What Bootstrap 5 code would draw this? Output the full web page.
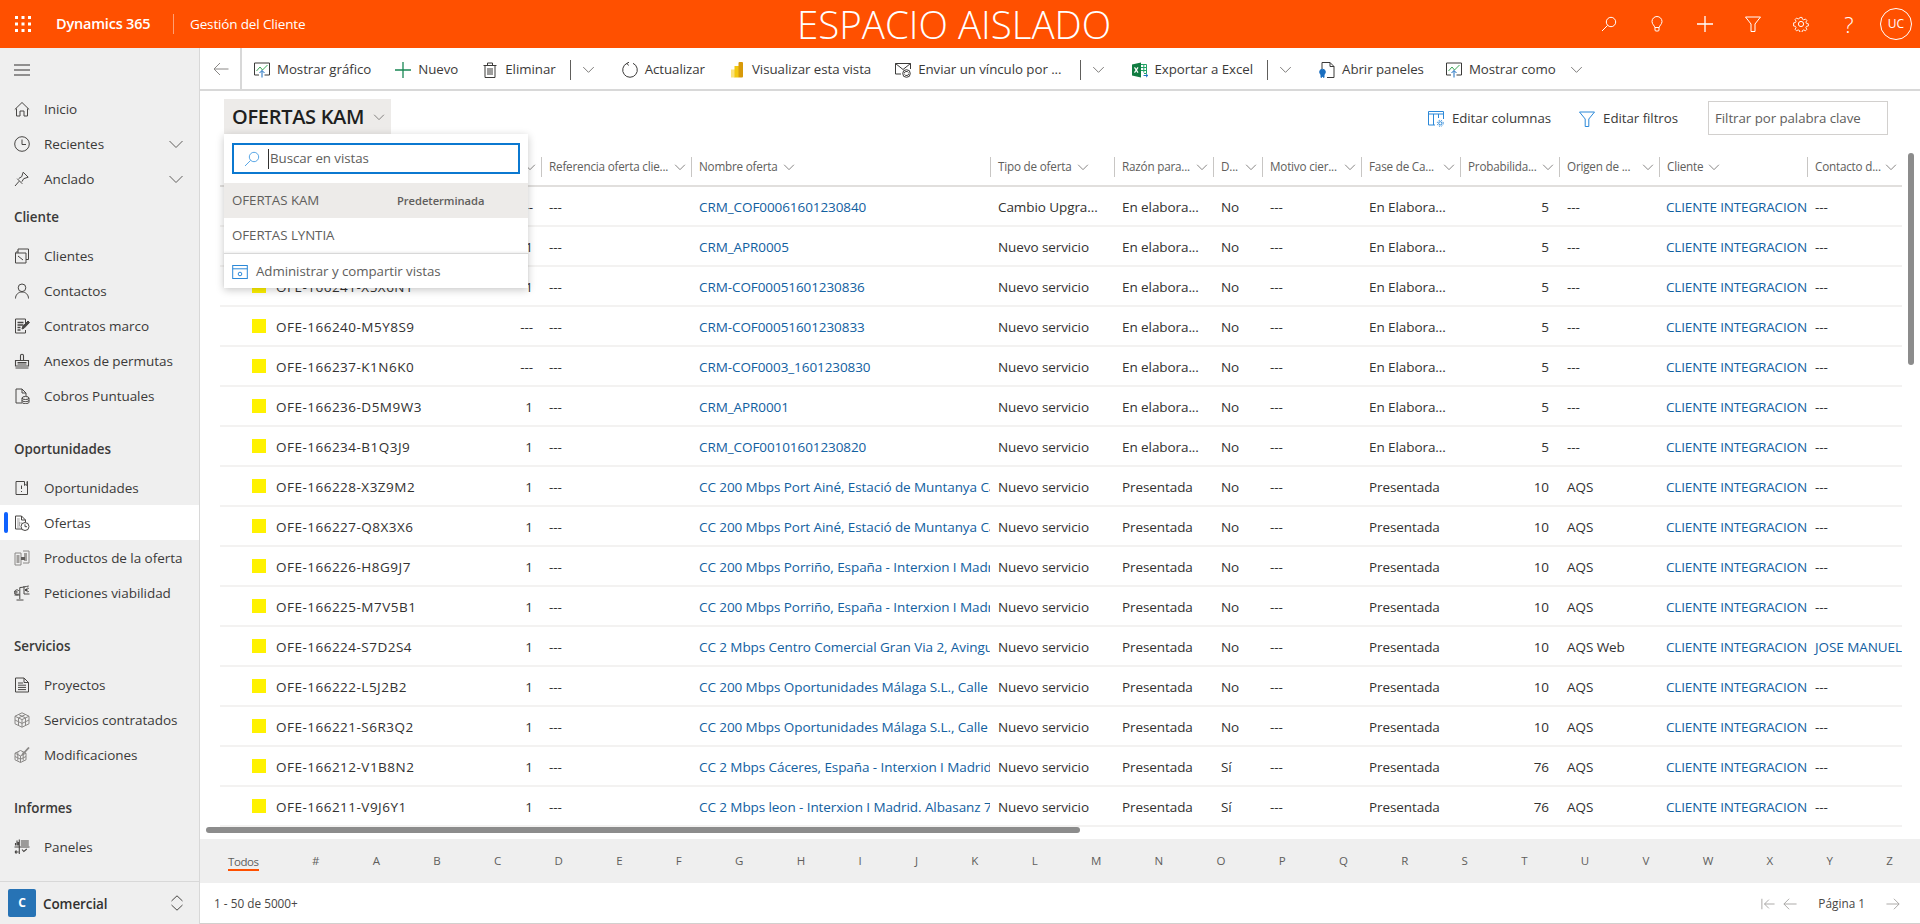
<!doctype html>
<html lang="es">
<head>
<meta charset="utf-8">
<title>Ofertas</title>
<link href="https://cdn.jsdelivr.net/npm/bootstrap@5.3.0/dist/css/bootstrap.min.css" rel="stylesheet">
<style>
html,body{height:100%;overflow:hidden}
body{font-family:"Open Sans","Noto Sans",sans-serif;font-size:13.5px;color:#323130;background:#fff}
#shell{min-height:0}
svg.ic{width:16px;height:16px;flex:none;fill:none;stroke:currentColor;stroke-width:1}
.appbar{height:48px;background:#ff5000;color:#fff;flex:none}
.waffle{margin:0 0 0 15px;color:#fff;stroke:none!important;fill:#fff!important}
.brand{font-size:14.5px;font-weight:600;margin-left:25px;width:117px;letter-spacing:-.2px}
.brand-sep{width:1px;height:20px;background:rgba(255,255,255,.45)}
.app-name{font-size:13.5px;margin-left:16px;width:270px;letter-spacing:-.15px}
.sandbox{font-size:38.5px;font-weight:300;line-height:48px;margin-left:337px;width:340px;white-space:nowrap}
.head-ic{width:48px;justify-content:center;display:flex;align-items:center;height:48px}
.head-q{font-size:22px;font-weight:300;line-height:1}
.avatar{width:32px;height:32px;border:1px solid #fff;border-radius:50%;font-size:12px;margin:0 8px 0 7px}
.side{width:200px;background:#efefef;border-right:1px solid #d8d8d8;flex:none}
.burger{height:43px;padding-left:14px}
.nv-item{height:35px;padding-left:14px;padding-top:1px;position:relative;white-space:nowrap;letter-spacing:-.05px;color:#3b3a39}
.nv-item svg.ic{margin-right:14px;color:#484644}
.nv-item svg.chev{margin:0 15px 0 auto;color:#605e5c}
.nv-item.muted svg.ic{color:#8a8886}
.nv-item.on{background:#fff}
.nv-item.on::before{content:"";position:absolute;left:4px;top:7px;bottom:7px;width:4px;background:#0f62fe;border-radius:2px}
.nv-head{height:42px;padding-left:14px;padding-top:1px;font-weight:600;color:#3b3a39;font-size:13.4px;letter-spacing:-.05px}
.nv-gap{margin-top:15px}
.area-sw{height:43px;border-top:1px solid #d8d8d8;padding-left:8px;flex:none}
.area-tile{width:28px;height:28px;background:#2773b5;color:#fff;font-weight:700;font-size:12px;border-radius:2px}
.area-name{margin-left:7px;font-weight:600;letter-spacing:-.1px;padding-top:2px}
.area-chev{margin-left:auto;margin-right:14px;color:#484644}
.cmd{height:43px;border-bottom:2px solid #d8d8d8;flex:none;white-space:nowrap;font-size:13.3px;letter-spacing:-.05px;color:#3b3a39}
.back-cell{width:42px;height:41px;border-right:2px solid #d8d8d8;padding-left:13px;color:#8a8886;margin-right:12px}
.cb{margin-right:24px;padding-top:2px}
.cb svg.ic{margin-right:7px}
.cb.tight{margin-right:14px}
.cb.mid{margin-right:18px}
.cb.narrow{margin-right:22px}
.cb-sep{width:1px;height:20px;background:#605e5c;margin:2px 11px 0 0}
svg.ic.cb-chev{width:13px;height:13px;margin:2px 27px 0 0;color:#605e5c}
.view-head{height:66px;flex:none;padding:8px 32px 0 24px;align-items:flex-start}
.view-btn{height:35px;width:167px;background:#edebe9;padding:1px 0 0 8px;font-size:20px;font-weight:600;color:#201f1e;white-space:nowrap;letter-spacing:-.3px}
.view-btn svg.ic{margin-left:9px;color:#605e5c;width:12px;height:12px}
.vh-act{font-size:13.3px;letter-spacing:-.05px;color:#3b3a39;white-space:nowrap;height:39px}
.vh-act svg{margin-right:8px}
.vh-act.first{margin-right:28px}
.kw{width:180px;height:34px;border:1px solid #d2d0ce;margin-left:30px;margin-top:2px;padding:2px 0 0 6px;color:#605e5c;font-size:13.3px;letter-spacing:-.05px}
.grid-wrap{flex:1 1 0;min-height:0;position:relative;overflow:hidden}
.dg{table-layout:fixed;width:1682px;margin:0 0 0 20px;border-collapse:separate;border-spacing:0;--bs-table-bg:transparent;font-size:13.5px}
.dg th{height:30px;padding:0;border-bottom:2px solid #e1dfdd;font-weight:400;font-size:11.7px;color:#605e5c;letter-spacing:-.2px;vertical-align:top;overflow:hidden}
.hc{height:20px;border-left:1px solid #c8c6c4;padding:0 5px 0 7px;white-space:nowrap}
.hc svg.ic{width:12px;height:12px;margin-left:5px}
.hc svg.far{margin-left:auto}
.dg td{height:40px;padding:2px 0 0 8px;border-bottom:2px solid #f3f2f1;white-space:nowrap;overflow:hidden;vertical-align:middle;color:#323130;letter-spacing:-.08px}
.dg td.nm{padding-left:32px;letter-spacing:.49px}
.dg td.rt{text-align:right;padding:2px 8px 0 0}
.dg td.rt2{text-align:right;padding:2px 10px 0 0}
.dg td.cl{padding-left:7px;letter-spacing:-.16px}
.dg a{color:#11609f;text-decoration:none}
.sq{display:inline-block;width:14px;height:14px;background:#fff200;margin-right:10px;vertical-align:-1px}
.hthumb{position:absolute;left:6px;bottom:6px;height:6px;width:874px;background:#8c8c8c;border-radius:3px}
.vthumb{position:absolute;right:6px;top:105px;height:212px;width:6px;background:#8c8c8c;border-radius:3px;z-index:2}
.alpha{height:44px;background:#efefef;flex:none;padding:0 27px 0 28px;font-size:11.5px;color:#605e5c}
.alpha .now{border-bottom:2px solid #ff5000;line-height:14px;padding-top:2px;position:relative;top:1px;letter-spacing:-.4px}
.pager{height:41px;border-bottom:1px solid #d2d0ce;flex:none;padding:2px 20px 0 14px;font-size:11.8px;color:#484644}
.pager svg.ic{color:#a19f9d;width:14px;height:14px}
.pg-txt{margin:0 21px}
.vmenu{position:absolute;left:24px;top:86px;width:304px;height:154px;background:#fff;box-shadow:0 2px 8px rgba(0,0,0,.22);z-index:5;color:#605e5c;font-size:13.3px;letter-spacing:-.05px}
.vsearch{height:31px;margin:9px 8px;border:2px solid #0b78d0;padding:1px 0 0 10px;color:#605e5c}
.vsearch svg.ic{color:#5aa7e6;margin-right:8px}
.vsearch i{width:1px;height:20px;background:#323130;margin-right:1px}
.vitem{height:35px;padding:2px 0 0 8px;white-space:nowrap;flex:none}
.vitem.sel{background:#edebe9}
.vitem b{font-weight:600;font-size:11.2px;position:absolute;left:173px}
.vman{height:36px;border-top:1px solid #d8d8d8;box-shadow:0 -1px 2px rgba(0,0,0,.08);padding:3px 0 0 8px;gap:8px}
.vman svg.ic{color:#2b88d8}
.c1{width:220px}.c2{width:101px}.c3{width:150px}.c4{width:299px}.c5{width:124px}.c6{width:99px}.c7{width:49px}.c8{width:99px}.c9{width:99px}.c10{width:99px}.c11{width:100px}.c12{width:148px}.c13{width:95px}
</style>
</head>
<body class="d-flex flex-column">
<svg width="0" height="0" class="position-absolute">
<defs>
<symbol id="i-chev" viewBox="0 0 16 16"><path d="M1.500 5 8 11.500 14.500 5"/></symbol>
<symbol id="i-search" viewBox="0 0 16 16"><circle cx="10" cy="6" r="4.700"/><path d="M6.600 9.400 1 15"/></symbol>
<symbol id="i-bulb" viewBox="0 0 16 16"><path d="M5.800 11.500C5.600 9.500 3 8.300 3 5.500a5 5 0 0 1 10 0c0 2.800-2.600 4-2.800 6z"/><path d="M6 11.500V14a1 1 0 0 0 1 1h2a1 1 0 0 0 1-1v-2.500"/></symbol>
<symbol id="i-plus" viewBox="0 0 16 16"><path d="M8 0v16M0 8h16" stroke-width="1.300"/></symbol>
<symbol id="i-funnel" viewBox="0 0 16 16"><path d="M.5 1h15L10 8v7.500H6V8z"/></symbol>
<symbol id="i-gear" viewBox="0 0 16 16"><circle cx="8" cy="8" r="2.600"/><path d="M6.800.8h2.400l.4 2 1.500.7 1.800-1 1.600 1.700-1.100 1.700.7 1.500 2 .4v2.400l-2 .4-.7 1.500 1.100 1.700-1.600 1.700-1.800-1-1.500.7-.4 2H6.800l-.4-2-1.500-.7-1.800 1-1.600-1.700 1.100-1.700-.7-1.500-2-.4V6.800l2-.4.7-1.500-1.100-1.700 1.600-1.700 1.800 1 1.500-.7z" transform="translate(.7 .7) scale(.91)"/></symbol>
<symbol id="i-home" viewBox="0 0 16 16"><path d="M.8 8.500 8 1.500l7.200 7M2.500 7.500v7.500h3.500v-5h4v5h3.500V7.500"/></symbol>
<symbol id="i-clock" viewBox="0 0 16 16"><circle cx="8" cy="8" r="7.300"/><path d="M8 3.500V8.500H12"/></symbol>
<symbol id="i-pin" viewBox="0 0 16 16"><path d="M1 15l4.200-4.800M3.200 7.700l5.100 5.100M4.700 7.500l3-1.800 1.500-4.500 5 5-4.500 1.500-1.800 3"/></symbol>
<symbol id="i-client" viewBox="0 0 16 16"><path d="M1.500 15V5H12v10zM1.500 5 4 2.500V1h10.500v10.500H12M4 5v-2.500M4 8l5 4"/></symbol>
<symbol id="i-person" viewBox="0 0 16 16"><circle cx="8" cy="4.800" r="3.800"/><path d="M1.500 15.500c0-3.800 2.800-6.500 6.500-6.500s6.500 2.700 6.500 6.500"/></symbol>
<symbol id="i-contract" viewBox="0 0 16 16"><path d="M11.500 6V1h-10v14h10v-3"/><path d="M3.500 4.500h6M3.500 7h6M3.500 9.500h3M3.500 12h3" stroke-width="1.500"/><path d="M8 11l.7-2.500 5.300-5.500 1.500 1.500-5.300 5.600z" fill="currentColor"/></symbol>
<symbol id="i-stamp" viewBox="0 0 16 16"><path d="M6.500 7V2.800a1.500 1.500 0 0 1 3 0V7M1.500 7.500h13V13h-13zM1.500 15h13M3.500 9.500h9M3.500 11h9" stroke-width="1.100"/></symbol>
<symbol id="i-cobro" viewBox="0 0 16 16"><path d="M8 15H2V1h6l4 4v3M8 1v4h4"/><ellipse cx="11.500" cy="10" rx="3.500" ry="1.500"/><path d="M8 10v4.300c0 .8 1.600 1.300 3.500 1.300s3.500-.5 3.500-1.300V10M8 12.300c0 .8 1.600 1.300 3.500 1.300s3.500-.5 3.500-1.300"/></symbol>
<symbol id="i-opp" viewBox="0 0 16 16"><path d="M10.500 1.500H2v13h11.500V1.500H13v4l-1.200-1-1.300 1zM7.500 5.500V9M7.500 11v1"/></symbol>
<symbol id="i-oferta" viewBox="0 0 16 16"><path d="M8 14H1.500V1h6l4 4v2M7.500 1v4h4"/><path d="M3.500 4h2M3.500 6h2M3.500 8h4M3.500 10h2.500M3.500 12h2" stroke-dasharray="1 .6"/><circle cx="11" cy="11.500" r="4"/><path d="M11 9.300v2.400h2"/></symbol>
<symbol id="i-prod" viewBox="0 0 16 16"><path d="M1 3h6v12H1zM9 1h6v12H9" stroke="#8a8886"/><path d="M2.500 5h3v8h-3zM10 3h3v8h-3z" fill="#a19f9d" stroke="none"/><path d="M7 7h4v3H7z" fill="#605e5c" stroke="none"/></symbol>
<symbol id="i-viab" viewBox="0 0 16 16"><path d="M5.800 2.500v11.500M2.500 15h7M5.800 2.500c3 0 6-1 9-1.500M.5 10h5.300M10 1v8h5.500"/><path d="M4.800 5.700A2.500 2.500 0 1 0 4.800 9M.5 6.800h3M.5 8h3M14.800 3.400a1.800 1.800 0 1 0 0 3.100M11 4.500h2.500M11 5.500h2.500"/></symbol>
<symbol id="i-doc" viewBox="0 0 16 16"><path d="M10 1H1.500v14h13V5.500zM10 1v4.500h4.500M4 6h5M4 8.200h8M4 10.400h8M4 12.600h8"/></symbol>
<symbol id="i-cube" viewBox="0 0 16 16"><path d="M8 .8 15 4.200v7.600L8 15.200 1 11.800V4.200zM1 4.200l7 3.400 7-3.400M8 7.600v7.600M4.500 2.500l7 3.400M11.500 2.500l-7 3.400M1 8l7 3.400L15 8M4.500 6v7.500M11.500 6v7.500"/></symbol>
<symbol id="i-mod" viewBox="0 0 16 16"><path d="M6.500 3.500 12 6.200v6.600l-5.500 2.700L1 12.800V6.200zM1 6.200l5.500 2.700L12 6.200M6.500 9v6.500M1 9.500l5.500 2.700 5.500-2.700M3.800 5v8.500M9.200 5v8.500"/><path d="M8 8l7-7.500" stroke-width="1.800"/></symbol>
<symbol id="i-panel" viewBox="0 0 16 16"><path d="M.5 8h15M5.300.5V15M1.500 6.500V4M3 6.500V1.500M4.200 6.500V3M6.800 2h8M6.800 4h8M6.800 6h8M1 13h3.500M1 13l1.500-1.500M1 13l1.500 1.500M8 10.500l1.800 2L12.800 10" stroke-width="1.100"/></symbol>
<symbol id="i-updown" viewBox="0 0 16 16"><path d="M2.500 6 8 .8 13.500 6M2.500 10 8 15.200 13.500 10"/></symbol>
<symbol id="i-left" viewBox="0 0 16 16"><path d="M15.500 8H1M7 2 1 8l6 6"/></symbol>
<symbol id="i-right" viewBox="0 0 16 16"><path d="M.5 8H15M9 2l6 6-6 6"/></symbol>
<symbol id="i-first" viewBox="0 0 16 16"><path d="M1 2v12M15.500 8H4M9 3 4 8l5 5"/></symbol>
<symbol id="i-chart" viewBox="0 0 16 16"><path d="M5 13H.5V1h15v12h-5" stroke="#3b3a39"/><path d="M2.500 9 6 5l2.500 3 5-5" stroke="#3aa655"/><path d="M8 15.500V8.500M5.500 11 8 8.500l2.500 2.500" stroke="#1a6fc0"/></symbol>
<symbol id="i-trash" viewBox="0 0 16 16"><path d="M1.500 3.500h13M5.500 3.500V1h5v2.500M3 3.500V15.500h10V3.500M6 6v7M8 6v7M10 6v7"/></symbol>
<symbol id="i-refresh" viewBox="0 0 16 16"><path d="M5 1.300a7.300 7.300 0 1 0 6 0"/><path d="M5 1.300 7 .2M5 1.300 6.500 3.500"/></symbol>
<symbol id="i-pbi" viewBox="0 0 16 16"><rect x="2" y="7.500" width="4" height="8" fill="#fbe27a" stroke="none"/><rect x="5.500" y="4" width="4.500" height="11.500" fill="#f2c811" stroke="none"/><rect x="9.500" y="0" width="4.500" height="15.500" rx="1" fill="#d89a0a" stroke="none"/></symbol>
<symbol id="i-mail" viewBox="0 0 16 16"><path d="M6 12H.5V1.500h15V7M.5 1.500 8 7.500l7.500-6"/><circle cx="11.500" cy="11.500" r="3.800"/><path d="M9 11.500a2.500 2.500 0 0 1 4.500-1M14 11.500a2.500 2.500 0 0 1-4.500 1"/></symbol>
<symbol id="i-xl" viewBox="0 0 16 16"><path d="M0 2.500 9 .5v15l-9-2z" fill="#107c41" stroke="none"/><path d="M2.500 5.300 6 10.700M6 5.300l-3.500 5.400" stroke="#fff" stroke-width="1.200"/><path d="M9 2.500h5.500v9H12M9 5.500h5.500M9 8.500h5.500M11.800 2.500v8" stroke="#21a366"/><path d="M11.500 13.500h4M14 11.800l1.800 1.700-1.800 1.700" stroke="#1a6fc0"/></symbol>
<symbol id="i-dash" viewBox="0 0 16 16"><path d="M6 .5h5l4 4v11H8M11 .5v4h4M3 7V.5h3"/><circle cx="3.500" cy="10" r="2.800" fill="#1a6fc0" stroke="#1a6fc0"/><path d="M2 12v3.500l1.500-1 1.500 1V12" fill="#1a6fc0" stroke="#1a6fc0"/></symbol>
<symbol id="i-cols" viewBox="0 0 16 16"><path d="M7 14H.5V.5h15V8M.5 3h15M5.500 3v11M10.500 3v4" stroke="#2b88d8"/><circle cx="12.300" cy="12.300" r="1.600" stroke="#2b88d8"/><circle cx="12.300" cy="12.300" r="3" stroke="#2b88d8" stroke-dasharray="1.200 1.200"/></symbol>
<symbol id="i-filter" viewBox="0 0 16 16"><path d="M.5 1h15L9.800 8v7.500H6.200V8z" stroke="#2b88d8"/></symbol>
<symbol id="i-manage" viewBox="0 0 16 16"><rect x=".7" y="1.500" width="14.600" height="13"/><path d="M.7 4.800h14.600"/><circle cx="8" cy="10" r="1.800"/></symbol>
<symbol id="i-burger" viewBox="0 0 16 16"><path d="M0 3h16M0 8h16M0 13h16" stroke-width="1.100"/></symbol>
</defs>
</svg>

<header class="appbar d-flex align-items-center">
  <svg class="ic waffle" viewBox="0 0 16 16"><rect x="0" y="0" width="3" height="3"/><rect x="6.500" y="0" width="3" height="3"/><rect x="13" y="0" width="3" height="3"/><rect x="0" y="6.500" width="3" height="3"/><rect x="6.500" y="6.500" width="3" height="3"/><rect x="13" y="6.500" width="3" height="3"/><rect x="0" y="13" width="3" height="3"/><rect x="6.500" y="13" width="3" height="3"/><rect x="13" y="13" width="3" height="3"/></svg>
  <div class="brand">Dynamics 365</div>
  <div class="brand-sep"></div>
  <div class="app-name">Gestión del Cliente</div>
  <div class="sandbox">ESPACIO AISLADO</div>
  <div class="ms-auto d-flex align-items-center">
    <div class="head-ic"><svg class="ic"><use href="#i-search"/></svg></div>
    <div class="head-ic"><svg class="ic"><use href="#i-bulb"/></svg></div>
    <div class="head-ic"><svg class="ic"><use href="#i-plus"/></svg></div>
    <div class="head-ic"><svg class="ic"><use href="#i-funnel"/></svg></div>
    <div class="head-ic"><svg class="ic"><use href="#i-gear"/></svg></div>
    <div class="head-ic head-q">?</div>
    <div class="avatar d-flex align-items-center justify-content-center">UC</div>
  </div>
</header>

<div class="d-flex flex-grow-1" id="shell">
  <aside class="side d-flex flex-column">
    <div class="flex-grow-1">
      <div class="burger d-flex align-items-center"><svg class="ic"><use href="#i-burger"/></svg></div>
      <div class="nv-item d-flex align-items-center"><svg class="ic"><use href="#i-home"/></svg>Inicio</div>
      <div class="nv-item d-flex align-items-center"><svg class="ic"><use href="#i-clock"/></svg>Recientes<svg class="ic chev"><use href="#i-chev"/></svg></div>
      <div class="nv-item d-flex align-items-center"><svg class="ic"><use href="#i-pin"/></svg>Anclado<svg class="ic chev"><use href="#i-chev"/></svg></div>
      <div class="nv-head d-flex align-items-center">Cliente</div>
      <div class="nv-item d-flex align-items-center"><svg class="ic"><use href="#i-client"/></svg>Clientes</div>
      <div class="nv-item d-flex align-items-center"><svg class="ic"><use href="#i-person"/></svg>Contactos</div>
      <div class="nv-item d-flex align-items-center"><svg class="ic"><use href="#i-contract"/></svg>Contratos marco</div>
      <div class="nv-item d-flex align-items-center"><svg class="ic"><use href="#i-stamp"/></svg>Anexos de permutas</div>
      <div class="nv-item d-flex align-items-center"><svg class="ic"><use href="#i-cobro"/></svg>Cobros Puntuales</div>
      <div class="nv-head nv-gap d-flex align-items-center">Oportunidades</div>
      <div class="nv-item d-flex align-items-center"><svg class="ic"><use href="#i-opp"/></svg>Oportunidades</div>
      <div class="nv-item on d-flex align-items-center"><svg class="ic"><use href="#i-oferta"/></svg>Ofertas</div>
      <div class="nv-item muted d-flex align-items-center"><svg class="ic"><use href="#i-prod"/></svg>Productos de la oferta</div>
      <div class="nv-item d-flex align-items-center"><svg class="ic"><use href="#i-viab"/></svg>Peticiones viabilidad</div>
      <div class="nv-head nv-gap d-flex align-items-center">Servicios</div>
      <div class="nv-item d-flex align-items-center"><svg class="ic"><use href="#i-doc"/></svg>Proyectos</div>
      <div class="nv-item muted d-flex align-items-center"><svg class="ic"><use href="#i-cube"/></svg>Servicios contratados</div>
      <div class="nv-item muted d-flex align-items-center"><svg class="ic"><use href="#i-mod"/></svg>Modificaciones</div>
      <div class="nv-head nv-gap d-flex align-items-center">Informes</div>
      <div class="nv-item d-flex align-items-center"><svg class="ic"><use href="#i-panel"/></svg>Paneles</div>
    </div>
    <div class="area-sw d-flex align-items-center">
      <div class="area-tile d-flex align-items-center justify-content-center">C</div>
      <div class="area-name">Comercial</div>
      <svg class="ic area-chev"><use href="#i-updown"/></svg>
    </div>
  </aside>

  <main class="flex-grow-1 d-flex flex-column position-relative overflow-hidden">
    <div class="cmd d-flex align-items-center">
      <div class="back-cell d-flex align-items-center"><svg class="ic"><use href="#i-left"/></svg></div>
      <div class="cb d-flex align-items-center"><svg class="ic"><use href="#i-chart"/></svg>Mostrar gráfico</div>
      <div class="cb d-flex align-items-center"><svg class="ic text-success"><use href="#i-plus"/></svg>Nuevo</div>
      <div class="cb tight d-flex align-items-center"><svg class="ic"><use href="#i-trash"/></svg>Eliminar</div>
      <div class="cb-sep"></div><svg class="ic cb-chev"><use href="#i-chev"/></svg>
      <div class="cb d-flex align-items-center"><svg class="ic"><use href="#i-refresh"/></svg>Actualizar</div>
      <div class="cb d-flex align-items-center"><svg class="ic"><use href="#i-pbi"/></svg>Visualizar esta vista</div>
      <div class="cb mid d-flex align-items-center"><svg class="ic"><use href="#i-mail"/></svg>Enviar un vínculo por ...</div>
      <div class="cb-sep"></div><svg class="ic cb-chev"><use href="#i-chev"/></svg>
      <div class="cb tight d-flex align-items-center"><svg class="ic"><use href="#i-xl"/></svg>Exportar a Excel</div>
      <div class="cb-sep"></div><svg class="ic cb-chev"><use href="#i-chev"/></svg>
      <div class="cb narrow d-flex align-items-center"><svg class="ic"><use href="#i-dash"/></svg>Abrir paneles</div>
      <div class="cb tight d-flex align-items-center"><svg class="ic"><use href="#i-chart"/></svg>Mostrar como</div>
      <svg class="ic cb-chev"><use href="#i-chev"/></svg>
    </div>

    <div class="view-head d-flex">
      <div class="view-btn d-flex align-items-center">OFERTAS KAM<svg class="ic"><use href="#i-chev"/></svg></div>
      <div class="ms-auto d-flex">
        <div class="vh-act first d-flex align-items-center"><svg class="ic"><use href="#i-cols"/></svg>Editar columnas</div>
        <div class="vh-act d-flex align-items-center"><svg class="ic"><use href="#i-filter"/></svg>Editar filtros</div>
        <div class="kw d-flex align-items-center">Filtrar por palabra clave</div>
      </div>
    </div>

    <div class="vmenu d-flex flex-column">
      <div class="vsearch d-flex align-items-center"><svg class="ic"><use href="#i-search"/></svg><i></i>Buscar en vistas</div>
      <div class="vitem sel d-flex align-items-center">OFERTAS KAM<b>Predeterminada</b></div>
      <div class="vitem d-flex align-items-center">OFERTAS LYNTIA</div>
      <div class="vman d-flex align-items-center"><svg class="ic"><use href="#i-manage"/></svg>Administrar y compartir vistas</div>
    </div>

    <div class="vthumb"></div>

    <div class="grid-wrap">
      <table class="table dg mb-0">
        <colgroup><col class="c1"><col class="c2"><col class="c3"><col class="c4"><col class="c5"><col class="c6"><col class="c7"><col class="c8"><col class="c9"><col class="c10"><col class="c11"><col class="c12"><col class="c13"></colgroup>
        <thead id="ghead"></thead>
        <tbody id="gbody"></tbody>
      </table>
      <div class="hthumb"></div>
    </div>

    <div class="alpha d-flex align-items-center justify-content-between" id="alpha"></div>

    <div class="pager d-flex align-items-center">
      <div>1 - 50 de 5000+</div>
      <div class="ms-auto d-flex align-items-center">
        <svg class="ic me-2"><use href="#i-first"/></svg>
        <svg class="ic"><use href="#i-left"/></svg>
        <span class="pg-txt">Página 1</span>
        <svg class="ic"><use href="#i-right"/></svg>
      </div>
    </div>
  </main>
</div>

<script>
var chev='<svg class="ic"><use href="#i-chev"/></svg>';
var chevFar='<svg class="ic far"><use href="#i-chev"/></svg>';
var heads=[['',0],['',1],['Referencia oferta clie...',1],['Nombre oferta',0],['Tipo de oferta',0],['Razón para...',1],['D...',1],['Motivo cier...',1],['Fase de Ca...',1],['Probabilida...',1],['Origen de ...',1],['Cliente',0],['Contacto d...',1]];
document.getElementById('ghead').innerHTML='<tr>'+heads.map(function(h,i){
  if(i===0)return '<th></th>';
  return '<th><div class="hc d-flex align-items-center">'+h[0]+(h[1]?chevFar:chev)+'</div></th>';
}).join('')+'</tr>';
var E=['En elabora...','En Elabora...','5','---'],P=['Presentada','Presentada','10','AQS'],Q=['Presentada','Presentada','76','AQS'];
var PA='CC 200 Mbps Port Ainé, Estació de Muntanya Ca',PO='CC 200 Mbps Porriño, España - Interxion I Madrid',MA='CC 200 Mbps Oportunidades Málaga S.L., Calle de';
var rows=[
['OFE-166245-H4J7T3','---','CRM_COF00061601230840','Cambio Upgra...',E,'No'],
['OFE-166244-C9P2R5','1','CRM_APR0005','Nuevo servicio',E,'No'],
['OFE-166241-X5X6N1','1','CRM-COF00051601230836','Nuevo servicio',E,'No'],
['OFE-166240-M5Y8S9','---','CRM-COF00051601230833','Nuevo servicio',E,'No'],
['OFE-166237-K1N6K0','---','CRM-COF0003_1601230830','Nuevo servicio',E,'No'],
['OFE-166236-D5M9W3','1','CRM_APR0001','Nuevo servicio',E,'No'],
['OFE-166234-B1Q3J9','1','CRM_COF00101601230820','Nuevo servicio',E,'No'],
['OFE-166228-X3Z9M2','1',PA,'Nuevo servicio',P,'No'],
['OFE-166227-Q8X3X6','1',PA,'Nuevo servicio',P,'No'],
['OFE-166226-H8G9J7','1',PO,'Nuevo servicio',P,'No'],
['OFE-166225-M7V5B1','1',PO,'Nuevo servicio',P,'No'],
['OFE-166224-S7D2S4','1','CC 2 Mbps Centro Comercial Gran Via 2, Avinguda','Nuevo servicio',['Presentada','Presentada','10','AQS Web'],'No','JOSE MANUEL GARCIA'],
['OFE-166222-L5J2B2','1',MA,'Nuevo servicio',P,'No'],
['OFE-166221-S6R3Q2','1',MA,'Nuevo servicio',P,'No'],
['OFE-166212-V1B8N2','1','CC 2 Mbps Cáceres, España - Interxion I Madrid. Albasanz','Nuevo servicio',Q,'Sí'],
['OFE-166211-V9J6Y1','1','CC 2 Mbps leon - Interxion I Madrid. Albasanz 71','Nuevo servicio',Q,'Sí']
];
document.getElementById('gbody').innerHTML=rows.map(function(r){
  var s=r[4];
  return '<tr><td class="nm"><span class="sq"></span>'+r[0]+'</td><td class="rt">'+r[1]+'</td><td>---</td><td><a href="#">'+r[2]+'</a></td><td>'+r[3]+'</td><td>'+s[0]+'</td><td>'+r[5]+'</td><td>---</td><td>'+s[1]+'</td><td class="rt2">'+s[2]+'</td><td>'+s[3]+'</td><td class="cl"><a href="#">CLIENTE INTEGRACION</a></td><td>'+(r[6]?'<a href="#">'+r[6]+'</a>':'---')+'</td></tr>';
}).join('');
document.getElementById('alpha').innerHTML=['Todos','#'].concat('ABCDEFGHIJKLMNOPQRSTUVWXYZ'.split('')).map(function(l,i){return '<span'+(i===0?' class="now"':'')+'>'+l+'</span>';}).join('');
</script>
<script src="https://cdn.jsdelivr.net/npm/bootstrap@5.3.0/dist/js/bootstrap.bundle.min.js"></script>
</body>
</html>
